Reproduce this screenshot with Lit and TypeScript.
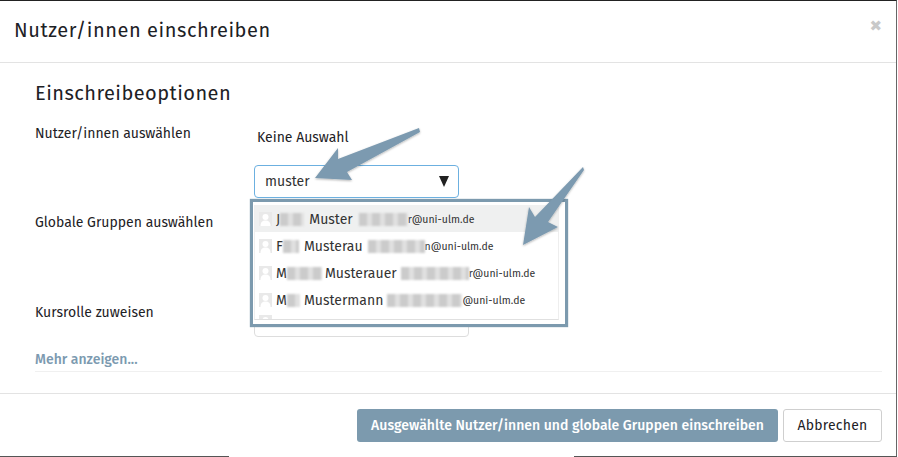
import { LitElement, html, css } from "lit";
import { customElement } from "lit/decorators.js";

const rows = [
  { a: "J", b: 24, gap: 5, last: "Muster", g: 6, m: 49, end: "r@uni-ulm.de", hl: true },
  { a: "F", b: 16, gap: 5, last: "Musterau", g: 5, m: 57, end: "n@uni-ulm.de", hl: false },
  { a: "M", b: 35, gap: 3, last: "Musterauer", g: 4, m: 68, end: "r@uni-ulm.de", hl: false },
  { a: "M", b: 13, gap: 4, last: "Mustermann", g: 4, m: 75, end: "@uni-ulm.de", hl: false },
];

@customElement("app-root")
export class AppRoot extends LitElement {
  static styles = css`
    :host { display: block; width: 898px; height: 457px; background: #fff; font-family: "Fira Sans", "Noto Sans", sans-serif; color: #1d2125; overflow: hidden; position: relative; }
    .modal { box-sizing: border-box; width: 897px; height: 457px; border-top: 1px solid #222; border-right: 1px solid #666; display: flex; flex-direction: column; }
    .head { height: 62px; flex: none; box-sizing: border-box; border-bottom: 1px solid #e3e3e3; display: flex; align-items: center; justify-content: space-between; padding: 0 14px 0 14px; }
    h1 { margin: 0 0 2px; font-size: 20px; font-weight: 400; letter-spacing: 0.55px; line-height: 59px; }
    .x { font-size: 15px; color: #c9c9c9; font-weight: 700; font-family: "DejaVu Sans", sans-serif; line-height: 1; margin-bottom: 10px; }
    .body { flex: 1; padding: 17px 14px 0 35px; display: flex; flex-direction: column; min-height: 0; }
    h2 { margin: 0; font-size: 20px; font-weight: 400; line-height: 26px; letter-spacing: 0.45px; }
    .form { display: grid; grid-template-columns: 219px 215px; margin-top: 18px; font-size: 14px; line-height: 20px; }
    .r1 { height: 89px; }
    .none { margin: 4px 0 0 3px; }
    .input { box-sizing: border-box; margin-top: 17px; height: 33px; width: 205px; border: 1px solid #6cb0e0; border-radius: 4px; padding: 0 9px 0 10px; display: flex; align-items: center; justify-content: space-between; font-size: 14px; color: #333; }
    .caret { width: 0; height: 0; border-left: 5.5px solid transparent; border-right: 5.5px solid transparent; border-top: 11px solid #222; }
    .r2 { height: 90px; }
    .r3 { height: 34px; }
    .role-select { box-sizing: border-box; height: 34px; border: 1px solid #ddd; border-radius: 4px; }
    .more { margin-top: 13px; font-size: 14px; line-height: 20px; font-weight: 500; color: #7c9ab0; border-bottom: 1px solid #f0f0f0; padding-bottom: 1px; }
    .foot { height: 64px; flex: none; box-sizing: border-box; border-top: 1px solid #e3e3e3; display: flex; justify-content: flex-end; gap: 5px; padding: 15px 14px 0 0; }
    button { box-sizing: border-box; height: 33px; border-radius: 3px; font: inherit; font-size: 14px; padding: 0; cursor: pointer; }
    .primary { width: 421px; background: #7c9aae; border: 0; color: #fff; font-weight: 500; letter-spacing: 0.02px; }
    .cancel { width: 99px; background: #fff; border: 1px solid #cfcfcf; color: #1d2125; letter-spacing: 0.2px; }
    .botline { position: absolute; bottom: 0; height: 1px; background: #555; }
    .l1 { left: 0; width: 229px; }
    .l2 { left: 574px; width: 323px; }
    .drop { position: absolute; left: 250px; top: 199px; width: 318px; height: 128px; box-sizing: border-box; border: 3px solid #7c9aae; background: #fff; padding: 3px 6px 0 1px; box-shadow: 0 0 1px #7c9aae; }
    .list { height: 115px; box-sizing: border-box; border-bottom: 1px solid #e0e0e0; border-left: 1px solid #eee; border-right: 1px solid #eee; overflow: hidden; font-size: 14px; color: #333; }
    .row { box-sizing: border-box; height: 27px; padding-top: 1px; display: flex; align-items: center; padding-left: 4px; white-space: nowrap; }
    .row.hl { background: #eff0f0; }
    .row.peek { align-items: flex-start; padding-top: 2px; }
    .av { width: 13px; height: 14px; margin-right: 4px; flex: none; display: block; }
    .blur { display: inline-block; height: 13px; background: repeating-linear-gradient(90deg, #cbcbcb 0 8px, #e0e0e0 8px 13px); filter: blur(1.2px); flex: none; }
    .mail { font-size: 10.5px; color: #333; }
    svg.arrows { position: absolute; left: 0; top: 0; width: 898px; height: 457px; pointer-events: none; overflow: visible; }
    .ar { fill: #7c9ab0; }
  `;

  private avatar() {
    return html`<svg class="av" viewBox="0 0 13 14"><rect width="13" height="14" fill="#e9e9e9"/><circle cx="6.5" cy="5" r="3" fill="#fff"/><path d="M1.5 14c0-4 2-5.5 5-5.5s5 1.5 5 5.5z" fill="#fff"/></svg>`;
  }

  render() {
    return html`
      <div class="modal">
        <div class="head"><h1>Nutzer/innen einschreiben</h1><span class="x">✖</span></div>
        <div class="body">
          <h2>Einschreibeoptionen</h2>
          <div class="form">
            <div class="r1">Nutzer/innen auswählen</div>
            <div class="r1">
              <div class="none">Keine Auswahl</div>
              <div class="input"><span>muster</span><span class="caret"></span></div>
            </div>
            <div class="r2">Globale Gruppen auswählen</div>
            <div class="r2"></div>
            <div class="r3">Kursrolle zuweisen</div>
            <div class="role-select"></div>
          </div>
          <div class="more">Mehr anzeigen...</div>
        </div>
        <div class="foot">
          <button class="primary">Ausgewählte Nutzer/innen und globale Gruppen einschreiben</button>
          <button class="cancel">Abbrechen</button>
        </div>
      </div>
      <div class="botline l1"></div>
      <div class="botline l2"></div>
      <div class="drop">
        <div class="list">
          ${rows.map(
            (r) => html`<div class="row ${r.hl ? "hl" : ""}">
              ${this.avatar()}
              <span>${r.a}</span><span class="blur" style="width:${r.b}px"></span>
              <span style="margin-left:${r.gap}px">${r.last}</span>
              <span class="blur" style="margin-left:${r.g}px;width:${r.m}px"></span><span class="mail">${r.end}</span>
            </div>`
          )}
          <div class="row peek">${this.avatar()}</div>
        </div>
      </div>
      <svg class="arrows" viewBox="0 0 898 457">
        <defs><filter id="s" x="-20%" y="-20%" width="140%" height="140%"><feDropShadow dx="0" dy="1" stdDeviation="1.2" flood-color="#000" flood-opacity=".3"/></filter></defs>
        <path class="ar" filter="url(#s)" d="M419 128 L420 132 L347 172 L352 180 L315 178 L338 148 L338 159 Z"/>
        <path class="ar" filter="url(#s)" d="M583 167 L584 170 L548 222 L558 227 L523 245 L529 207 L535 217 Z"/>
      </svg>
    `;
  }
}
